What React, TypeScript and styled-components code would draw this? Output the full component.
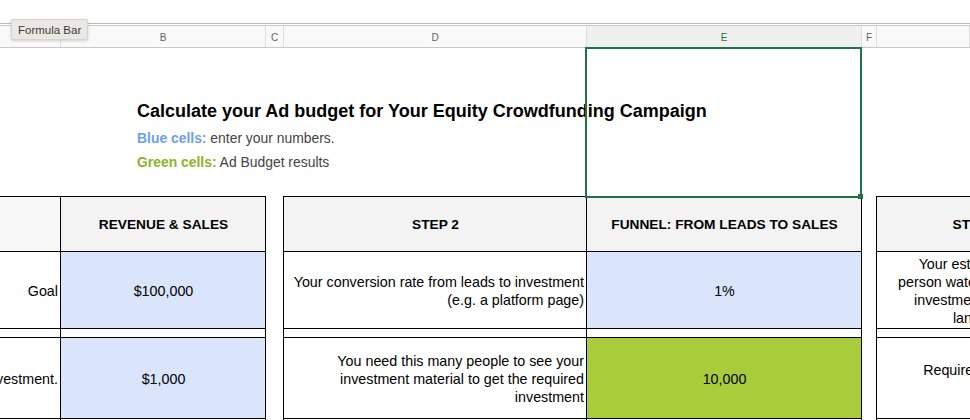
import React from "react";
import styled, { createGlobalStyle } from "styled-components";

const GlobalStyle = createGlobalStyle`
  html, body { margin: 0; padding: 0; background: #ffffff; }
  body { font-family: "Liberation Sans", Arial, sans-serif; overflow: hidden; }
`;

const Page = styled.div`
  position: relative;
  width: 970px;
  height: 420px;
  overflow: hidden;
  display: flex;
  flex-direction: column;
  background: #fff;
`;

const Tooltip = styled.div`
  position: absolute;
  left: 11px;
  top: 19px;
  height: 19px;
  padding: 0 6px;
  display: flex;
  align-items: center;
  background: #ebe8e4;
  border: 1px solid #d6d3cf;
  border-radius: 2px;
  box-shadow: 0 1px 3px rgba(0, 0, 0, 0.18);
  font-family: "Liberation Sans", Arial, sans-serif;
  font-size: 11.5px;
  color: #3a3a3a;
  z-index: 5;
`;

const TopSpace = styled.div`
  height: 23px;
  flex: none;
`;

const ColumnBar = styled.div`
  flex: none;
  border-top: 1px solid #b9b9b9;
  padding-top: 1px;
`;

const ColumnRow = styled.div`
  display: flex;
  height: 21px;
  border-top: 1px solid #c8c8c8;
  border-bottom: 1px solid #c8c8c8;
`;

const ColumnCell = styled.div<{ $w?: number; $active?: boolean }>`
  box-sizing: border-box;
  flex: ${(p) => (p.$w ? `0 0 ${p.$w}px` : "1 1 auto")};
  border-right: 1px solid #dedede;
  background: ${(p) => (p.$active ? "#f0f0f0" : "#f9f9f9")};
  display: flex;
  align-items: center;
  justify-content: center;
  font-size: 10px;
  color: ${(p) => (p.$active ? "#217346" : "#5f5f5f")};
  padding-top: 1px;
`;

const Sheet = styled.div`
  position: relative;
  flex: 1;
  display: flex;
  flex-direction: column;
`;

const Intro = styled.div`
  height: 148px;
  flex: none;
  padding: 53px 0 0 137px;
  box-sizing: border-box;
  display: flex;
  flex-direction: column;
`;

const Title = styled.div`
  font-size: 18px;
  font-weight: bold;
  line-height: 21px;
  color: #000;
  white-space: nowrap;
`;

const Legend = styled.div`
  font-size: 13.9px;
  line-height: 17px;
  color: #434343;
  margin-top: 8px;
  & + & {
    margin-top: 7px;
  }
`;

const LegendKey = styled.span<{ $color: string }>`
  color: ${(p) => p.$color};
  font-weight: bold;
`;

const Selection = styled.div`
  position: absolute;
  left: 585px;
  top: -1px;
  width: 277px;
  height: 151px;
  box-sizing: border-box;
  border: 2px solid #217346;
  z-index: 3;
  pointer-events: none;
`;

const Handle = styled.div`
  position: absolute;
  right: -3px;
  bottom: -3px;
  width: 5px;
  height: 5px;
  background: #217346;
`;

const Tables = styled.div`
  display: flex;
  align-items: flex-start;
`;

const Spacer = styled.div<{ $w: number }>`
  flex: 0 0 ${(p) => p.$w}px;
`;

const Group = styled.div<{ $cols: string; $left?: boolean }>`
  flex: none;
  display: grid;
  grid-template-columns: ${(p) => p.$cols};
  grid-template-rows: 54px 76px 8px 80px 80px;
  gap: 1px;
  background: #000;
  border: 1px solid #000;
  border-left-width: ${(p) => (p.$left ? 1 : 0)}px;
`;

type Tone = "head" | "headLight" | "plain" | "blue" | "green";

const toneBg: Record<Tone, string> = {
  head: "#f3f3f3",
  headLight: "#f8f8f8",
  plain: "#ffffff",
  blue: "#dae5fb",
  green: "#a9cc3a",
};

const Cell = styled.div<{ $tone?: Tone; $align?: "left" | "center" | "right"; $bold?: boolean }>`
  background: ${(p) => toneBg[p.$tone || "plain"]};
  display: flex;
  align-items: center;
  justify-content: ${(p) =>
    p.$align === "right" ? "flex-end" : p.$align === "left" ? "flex-start" : "center"};
  text-align: ${(p) => p.$align || "center"};
  font-size: ${(p) => (p.$bold ? "13.7px" : "14.3px")};
  line-height: 18px;
  font-weight: ${(p) => (p.$bold ? "bold" : "normal")};
  color: #000;
  padding: 1px 2px 0 3px;
  overflow: hidden;
  white-space: nowrap;
`;

const Wrap = styled.div`
  white-space: normal;
`;

export default function App() {
  return (
    <Page>
      <GlobalStyle />
      <Tooltip>Formula Bar</Tooltip>
      <TopSpace />
      <ColumnBar>
        <ColumnRow>
          <ColumnCell $w={61} />
          <ColumnCell $w={205}>B</ColumnCell>
          <ColumnCell $w={18}>C</ColumnCell>
          <ColumnCell $w={303}>D</ColumnCell>
          <ColumnCell $w={275} $active>E</ColumnCell>
          <ColumnCell $w={15}>F</ColumnCell>
          <ColumnCell />
        </ColumnRow>
      </ColumnBar>
      <Sheet>
        <Selection>
          <Handle />
        </Selection>
        <Intro>
          <Title>Calculate your Ad budget for Your Equity Crowdfunding Campaign</Title>
          <Legend>
            <LegendKey $color="#6d9eeb">Blue cells:</LegendKey> enter your numbers.
          </Legend>
          <Legend>
            <LegendKey $color="#8cb32d">Green cells:</LegendKey> Ad Budget results
          </Legend>
        </Intro>
        <Tables>
          <Group $cols="60px 204px">
            <Cell $tone="headLight" />
            <Cell $tone="head" $bold>REVENUE &amp; SALES</Cell>
            <Cell $align="right">Goal</Cell>
            <Cell $tone="blue">$100,000</Cell>
            <Cell />
            <Cell />
            <Cell $align="right">Minimum investment.</Cell>
            <Cell $tone="blue">$1,000</Cell>
            <Cell />
            <Cell />
          </Group>
          <Spacer $w={17} />
          <Group $cols="302px 274px" $left>
            <Cell $tone="head" $bold>STEP 2</Cell>
            <Cell $tone="head" $bold>FUNNEL: FROM LEADS TO SALES</Cell>
            <Cell $align="right">
              <Wrap>
                Your conversion rate from leads to investment
                <br />
                (e.g. a platform page)
              </Wrap>
            </Cell>
            <Cell $tone="blue">1%</Cell>
            <Cell />
            <Cell />
            <Cell $align="right">
              <Wrap>
                You need this many people to see your
                <br />
                investment material to get the required
                <br />
                investment
              </Wrap>
            </Cell>
            <Cell $tone="green">10,000</Cell>
            <Cell />
            <Cell />
          </Group>
          <Spacer $w={14} />
          <Group $cols="197px" $left>
            <Cell $tone="head" $bold>STEP 3</Cell>
            <Cell>
              <Wrap>
                Your estimated ad
                <br />
                person watching your ad
                <br />
                investment material
                <br />
                landing
              </Wrap>
            </Cell>
            <Cell />
            <Cell>
              <Wrap>
                Required budget
                <br />$
              </Wrap>
            </Cell>
            <Cell />
          </Group>
        </Tables>
      </Sheet>
    </Page>
  );
}
